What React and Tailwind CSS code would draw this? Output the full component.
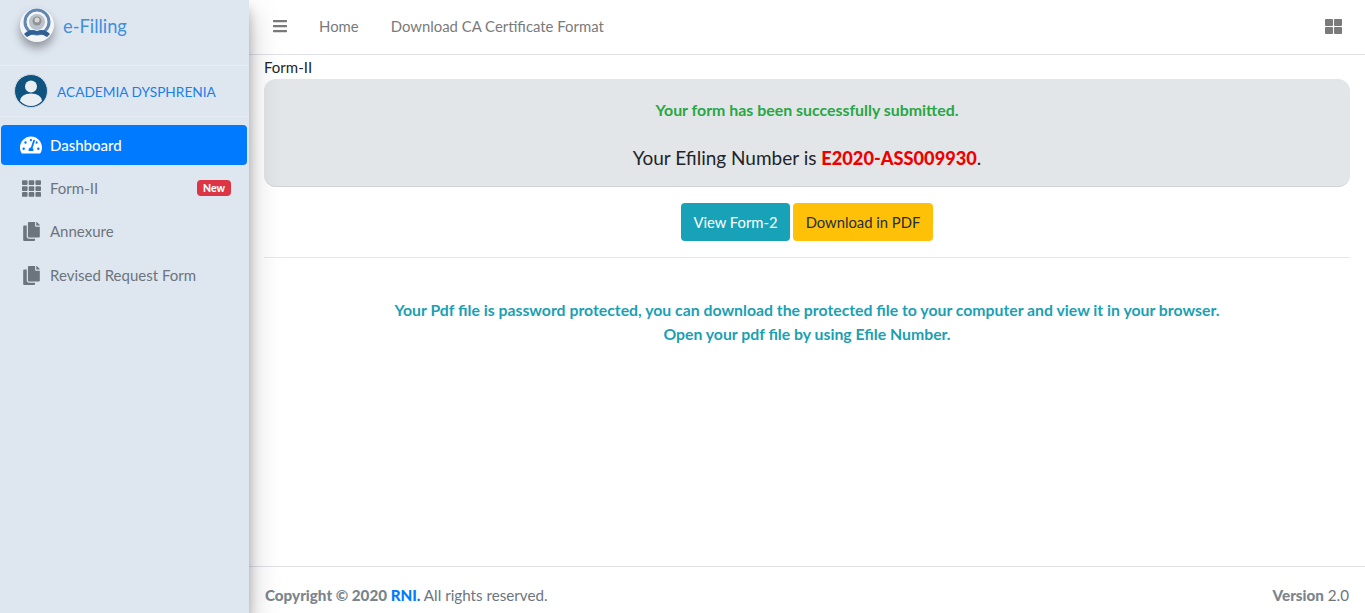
import { FaTachometerAlt, FaTh, FaCopy, FaBars, FaThLarge } from "react-icons/fa";

function Logo() {
  return (
    <svg width="34" height="34" viewBox="0 0 34 34" className="rounded-full">
      <circle cx="17" cy="17" r="17" fill="#f4f5f7" />
      <circle cx="17" cy="14" r="12" fill="none" stroke="#6288b2" strokeWidth="3" />
      <circle cx="17" cy="14" r="8" fill="#b9c3cc" />
      <circle cx="17" cy="13" r="4.5" fill="#8f9397" />
      <circle cx="17" cy="12" r="2.5" fill="#ddd8cc" />
      <path d="M4 26 Q10 20 17 23 Q24 20 30 26 L27 29 Q21 25 17 27 Q13 25 7 29 Z" fill="#2f5f94" />
    </svg>
  );
}

function Avatar() {
  return (
    <svg width="34" height="34" viewBox="0 0 34 34">
      <circle cx="17" cy="17" r="16.5" fill="#0f5480" stroke="#cfd8e2" strokeWidth="1" />
      <circle cx="17" cy="12.5" r="6" fill="#e9eef2" />
      <path d="M6 27 Q7 19.5 17 19.5 Q27 19.5 28 27 Q23 32 17 32 Q11 32 6 27 Z" fill="#e9eef2" />
    </svg>
  );
}

function NavItem({ icon, label, active, badge, iconSize }) {
  return (
    <div
      className={`flex items-center h-[40px] mb-[3px] pl-[19px] pr-[16px] rounded ${
        active ? "bg-[#007bff] text-white" : "text-[#6c757d]"
      }`}
    >
      <span className={`w-[22px] flex justify-center ${iconSize}`}>{icon}</span>
      <span className={`ml-[8px] text-[15px] ${active ? "font-medium" : ""}`}>{label}</span>
      {badge && (
        <span className="ml-auto bg-[#dc3545] text-white text-[10.5px] font-black leading-none px-[6px] py-[3px] rounded">
          {badge}
        </span>
      )}
    </div>
  );
}

export default function App() {
  return (
    <div className="flex h-[613px] w-[1365px] overflow-hidden bg-white font-['Lato','Liberation_Sans',sans-serif] text-[15px] text-[#212529]">
      <aside className="w-[249px] shrink-0 bg-[#dee6f0] shadow-[0_14px_28px_rgba(0,0,0,0.25),0_10px_10px_rgba(0,0,0,0.22)] z-10">
        <div className="flex items-center h-[66px] pl-[20px] pb-[15px] border-b border-[#e6ecf4]">
          <div className="rounded-full shadow-[0_6px_10px_rgba(0,0,0,0.35)] flex">
            <Logo />
          </div>
          <span className="ml-[9px] pt-[3px] text-[18.3px] text-[#3f8fe0]">e-Filling</span>
        </div>
        <div className="flex items-center h-[51px] pl-[14px] border-b border-[#e6ecf4]">
          <Avatar />
          <span className="ml-[9px] pt-[2px] text-[13.7px] text-[#1a7fe8]">ACADEMIA DYSPHRENIA</span>
        </div>
        <nav className="mt-[8px] pl-[1px] pr-[2px]">
          <NavItem icon={<FaTachometerAlt />} iconSize="text-[22px]" label="Dashboard" active />
          <NavItem icon={<FaTh />} iconSize="text-[19px]" label="Form-II" badge="New" />
          <NavItem icon={<FaCopy />} iconSize="text-[19px]" label="Annexure" />
          <div className="pt-[1px]">
            <NavItem icon={<FaCopy />} iconSize="text-[19px]" label="Revised Request Form" />
          </div>
        </nav>
      </aside>

      <div className="flex-1 flex flex-col min-w-0">
        <header className="flex items-center h-[55px] shrink-0 border-b border-[#dee2e6] text-[#7a7a7a] pl-[23px] pr-[23px] pb-[2px]">
          <FaBars className="text-[16px]" />
          <span className="ml-[31px] text-[14.9px]">Home</span>
          <span className="ml-[32px] text-[14.9px]">Download CA Certificate Format</span>
          <FaThLarge className="ml-auto text-[17px]" />
        </header>

        <main className="flex-1 px-[15px]">
          <div className="leading-[24px] h-[24px]">Form-II</div>
          <div className="bg-[#e3e6e8] rounded-[12px] h-[108px] flex flex-col items-center border-b border-[#d0d4d6]">
            <p className="mt-[19px] text-[15.9px] font-bold text-[#28a745]">Your form has been successfully submitted.</p>
            <p className="mt-[22px] text-[19px]">
              Your Efiling Number is <b className="text-[18.2px] font-black text-[#ee0000]">E2020-ASS009930</b>.
            </p>
          </div>
          <div className="flex justify-center gap-[3px] mt-[16px]">
            <div className="h-[38px] w-[109px] bg-[#17a2b8] text-white rounded flex items-center justify-center text-[14.8px]">View Form-2</div>
            <div className="h-[38px] w-[140px] bg-[#ffc107] text-[#1f2d3d] rounded flex items-center justify-center text-[14.8px]">Download in PDF</div>
          </div>
          <div className="border-b border-[#e6e8ea] mt-[16px]" />
          <div className="mt-[40px] text-center font-bold text-[#1b9fb3] leading-[24px] text-[15.8px]">
            <p>Your Pdf file is password protected, you can download the protected file to your computer and view it in your browser.</p>
            <p>Open your pdf file by using Efile Number.</p>
          </div>
        </main>

        <footer className="flex items-center justify-between h-[47px] shrink-0 border-t border-[#dee2e6] pl-[16px] pr-[16px] pt-[10px] text-[15.2px] text-[#6c757d]">
          <span>
            <b className="font-black text-[#7b858d]">Copyright © 2020 <span className="text-[#007bff]">RNI.</span></b> All rights reserved.
          </span>
          <span>
            <b className="font-black text-[#7b858d]">Version</b> 2.0
          </span>
        </footer>
      </div>
    </div>
  );
}
